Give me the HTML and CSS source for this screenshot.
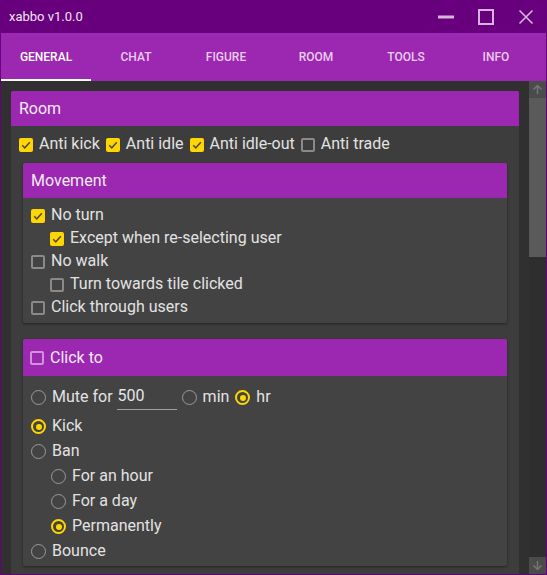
FILE: index.html
```html
<!DOCTYPE html>
<html>
<head>
<meta charset="utf-8">
<link rel="stylesheet" href="styles.css">
</head>
<body>
<div class="window">
  <header class="titlebar">
    <span class="title">xabbo v1.0.0</span>
    <div class="controls">
      <svg width="16" height="16" viewBox="0 0 16 16"><rect x="0" y="6.5" width="16" height="3" fill="#d6b4dd"/></svg>
      <svg width="16" height="16" viewBox="0 0 16 16"><rect x="1" y="1" width="14" height="14" fill="none" stroke="#d6b4dd" stroke-width="2"/></svg>
      <svg width="16" height="16" viewBox="0 0 16 16"><path d="M1.5 1.5 L14.5 14.5 M14.5 1.5 L1.5 14.5" stroke="#d6b4dd" stroke-width="1.6" fill="none"/></svg>
    </div>
  </header>
  <nav class="tabs">
    <div class="tab active">General</div>
    <div class="tab">Chat</div>
    <div class="tab">Figure</div>
    <div class="tab">Room</div>
    <div class="tab">Tools</div>
    <div class="tab">Info</div>
  </nav>
  <div class="body">
    <main class="content">
      <section class="card outer">
        <div class="card-head">Room</div>
        <div class="inline-row">
          <label class="opt"><span class="cb on"><svg width="14" height="14" viewBox="0 0 14 14"><path d="M3.2 7.2 L5.8 9.8 L10.8 4.2" stroke="#4a4a4a" stroke-width="1.5" fill="none"/></svg></span>Anti kick</label>
          <label class="opt"><span class="cb on"><svg width="14" height="14" viewBox="0 0 14 14"><path d="M3.2 7.2 L5.8 9.8 L10.8 4.2" stroke="#4a4a4a" stroke-width="1.5" fill="none"/></svg></span>Anti idle</label>
          <label class="opt"><span class="cb on"><svg width="14" height="14" viewBox="0 0 14 14"><path d="M3.2 7.2 L5.8 9.8 L10.8 4.2" stroke="#4a4a4a" stroke-width="1.5" fill="none"/></svg></span>Anti idle-out</label>
          <label class="opt"><span class="cb"></span>Anti trade</label>
        </div>

        <section class="card inner">
          <div class="card-head">Movement</div>
          <div class="list">
            <label class="opt item"><span class="cb on"><svg width="14" height="14" viewBox="0 0 14 14"><path d="M3.2 7.2 L5.8 9.8 L10.8 4.2" stroke="#4a4a4a" stroke-width="1.5" fill="none"/></svg></span>No turn</label>
            <label class="opt item sub"><span class="cb on"><svg width="14" height="14" viewBox="0 0 14 14"><path d="M3.2 7.2 L5.8 9.8 L10.8 4.2" stroke="#4a4a4a" stroke-width="1.5" fill="none"/></svg></span>Except when re-selecting user</label>
            <label class="opt item"><span class="cb"></span>No walk</label>
            <label class="opt item sub"><span class="cb"></span>Turn towards tile clicked</label>
            <label class="opt item"><span class="cb"></span>Click through users</label>
          </div>
        </section>

        <section class="card inner clickto">
          <div class="card-head head-check"><span class="cb light"></span>Click to</div>
          <div class="list radios">
            <div class="opt mute">
              <span class="rb"></span>Mute for
              <input class="field" type="text" value="500">
              <span class="rb"></span>min
              <span class="rb on"></span>hr
            </div>
            <div class="opt ritem"><span class="rb on"></span>Kick</div>
            <div class="opt ritem"><span class="rb"></span>Ban</div>
            <div class="opt ritem sub2"><span class="rb"></span>For an hour</div>
            <div class="opt ritem sub2"><span class="rb"></span>For a day</div>
            <div class="opt ritem sub2"><span class="rb on"></span>Permanently</div>
            <div class="opt ritem"><span class="rb"></span>Bounce</div>
          </div>
        </section>
      </section>
    </main>
    <div class="scrollbar">
      <div class="sb-btn"><svg width="17" height="17" viewBox="0 0 17 17"><path d="M8.5 13 V4.5 M4.5 8.5 L8.5 4.5 L12.5 8.5" stroke="#757575" stroke-width="1.5" fill="none"/></svg></div>
      <div class="sb-thumb"></div>
      <div class="sb-track"></div>
      <div class="sb-btn"><svg width="17" height="17" viewBox="0 0 17 17"><path d="M8.5 4 V12.5 M4.5 8.5 L8.5 12.5 L12.5 8.5" stroke="#757575" stroke-width="1.5" fill="none"/></svg></div>
    </div>
  </div>
</div>
</body>
</html>
```

FILE: styles.css
```css
html, body {
  margin: 0;
  padding: 0;
}
body {
  font-family: "Roboto", "Noto Sans", sans-serif;
  background: #303030;
}
.window {
  width: 547px;
  height: 575px;
  box-sizing: border-box;
  background: #68007e;
  padding: 0 1px 1px 1px;
  display: flex;
  flex-direction: column;
  overflow: hidden;
}
.titlebar {
  height: 33px;
  flex: none;
  display: flex;
  align-items: center;
  padding: 0 12px 0 8px;
  box-sizing: border-box;
}
.title {
  color: #f0e6f2;
  font-size: 13px;
}
.controls {
  margin-left: auto;
  display: flex;
  gap: 24px;
  align-items: center;
}
.controls svg {
  display: block;
}
.tabs {
  height: 48px;
  flex: none;
  background: #9c27b0;
  display: flex;
}
.tab {
  width: 90px;
  flex: none;
  box-sizing: border-box;
  text-align: center;
  text-transform: uppercase;
  font-size: 12px;
  font-weight: 500;
  line-height: 47px;
  padding-top: 1px;
  color: #e9cdee;
  position: relative;
}
.tab.active {
  color: #ffffff;
}
.tab.active::after {
  content: "";
  position: absolute;
  left: 0;
  right: 0;
  bottom: 0;
  height: 2px;
  background: #ffffff;
}
.body {
  flex: 1;
  display: flex;
  min-height: 0;
}
.content {
  flex: 1;
  background: #303030;
  padding: 10px 10px 0 10px;
  overflow: hidden;
}
.card {
  border-radius: 2px;
}
.outer {
  background: #3d3d3d;
  padding-bottom: 20px;
}
.inner {
  background: #434343;
  margin: 0 12px;
  box-shadow: 0 1px 3px rgba(0, 0, 0, 0.45);
}
.card-head {
  height: 35px;
  line-height: 36px;
  background: #9c27b0;
  color: #f3ecf5;
  font-size: 16px;
  padding-left: 8px;
  border-radius: 2px 2px 0 0;
}
.inline-row {
  display: flex;
  gap: 6px;
  padding: 7px 8px 0 8px;
  height: 20px;
  margin-bottom: 10px;
}
.opt {
  display: flex;
  align-items: center;
  gap: 6px;
  color: #e2e2e2;
  font-size: 16px;
  line-height: 20px;
  white-space: nowrap;
}
.opt .cb, .opt .rb {
  margin-bottom: -1px;
}
.inline-row .opt, .item, .ritem {
  padding-top: 1px;
  box-sizing: border-box;
}
.inline-row .opt {
  height: 21px;
}
.cb {
  width: 14px;
  height: 14px;
  box-sizing: border-box;
  border: 2px solid #8a8a8a;
  border-radius: 2px;
  flex: none;
  display: block;
}
.cb.on {
  border: none;
  background: #ffd600;
}
.cb.on svg {
  display: block;
}
.cb.light {
  border-color: #cf93da;
}
.list {
  padding: 5px 8px 5px 8px;
}
.item {
  height: 23px;
}
.sub {
  padding-left: 19px;
}
.clickto {
  margin-top: 16px;
}
.head-check {
  height: 37px;
  line-height: 38px;
  display: flex;
  align-items: center;
  gap: 6px;
  padding-left: 7px;
}
.radios {
  padding: 6px 8px 3px 8px;
}
.mute {
  height: 31px;
  padding-bottom: 1px;
  box-sizing: border-box;
}
.ritem {
  height: 25px;
}
.sub2 {
  padding-left: 20px;
}
.rb {
  width: 15px;
  height: 15px;
  box-sizing: border-box;
  border: 1.5px solid #9a9a9a;
  border-radius: 50%;
  flex: none;
  position: relative;
}
.rb.on {
  border: 2px solid #ffd600;
}
.rb.on::after {
  content: "";
  position: absolute;
  left: 2.5px;
  top: 2.5px;
  width: 6px;
  height: 6px;
  border-radius: 50%;
  background: #ffd600;
}
.field {
  width: 60px;
  height: 25px;
  box-sizing: border-box;
  margin: 0 0 0 -2px;
  padding: 0 1px 3px 1px;
  background: transparent;
  border: none;
  border-bottom: 1px solid #a0a0a0;
  color: #e6e6e6;
  font-family: "Roboto", "Noto Sans", sans-serif;
  font-size: 16px;
  outline: none;
}
.mute .field + .rb {
  margin-left: -1px;
}
.scrollbar {
  width: 17px;
  flex: none;
  display: flex;
  flex-direction: column;
  background: #2e2e2e;
}
.sb-btn {
  height: 17px;
  flex: none;
  background: #4b4b4b;
}
.sb-btn svg {
  display: block;
}
.sb-thumb {
  height: 159px;
  flex: none;
  background: #5a5a5a;
}
.sb-track {
  flex: 1;
}
```
